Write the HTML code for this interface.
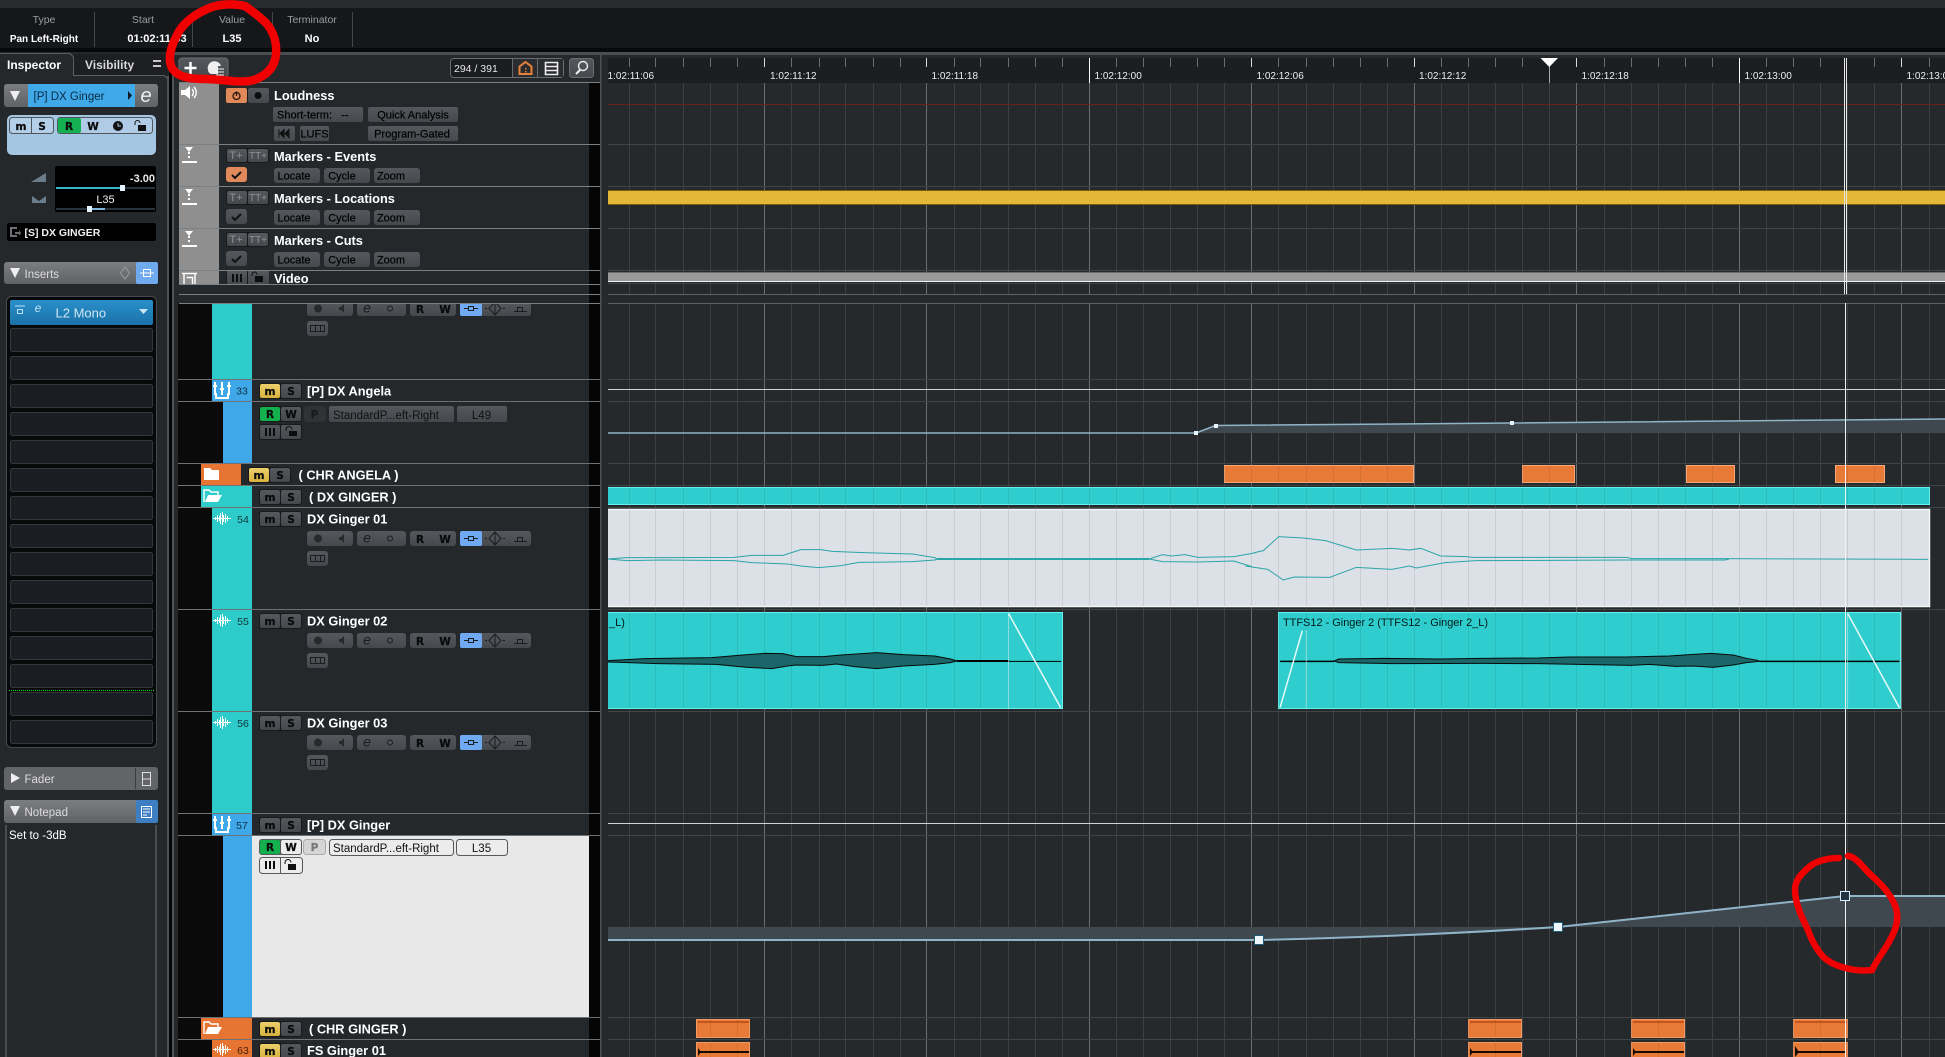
<!DOCTYPE html>
<html lang="en"><head><meta charset="utf-8"><title>Cubase project</title>
<style>
html,body{margin:0;padding:0;background:#25282b;width:1945px;height:1057px;overflow:hidden}
svg{display:block}
text{font-family:"Liberation Sans",sans-serif;white-space:pre}
.lb{font-size:10.5px;fill:#9a9ea2;text-anchor:middle}
.vl{font-size:10px;font-weight:bold;fill:#fff;text-anchor:middle}
.nm{font-size:12.8px;font-weight:bold;fill:#fff}
.bt{font-size:11px;fill:#000;stroke:#000;stroke-width:.2;text-anchor:middle}
.gl{font-family:"DejaVu Sans",sans-serif;font-size:10.5px;font-weight:bold;fill:#0a0b0c;stroke:#0a0b0c;stroke-width:.25;text-anchor:middle}
.no{font-size:10.5px;fill:#12343a;text-anchor:middle}
.ru{font-size:10px;fill:#eceef0}
.hd{font-size:11.5px;fill:#dcdcdc}
.s{fill:#1a1d21;stroke:#34373b}
.w{fill:none;stroke:#fff}
.k{fill:none;stroke:#1a1c1e}
</style></head><body>
<svg width="1945" height="1057" viewBox="0 0 1945 1057" xmlns="http://www.w3.org/2000/svg">
<defs>
<linearGradient id="gb" x1="0" y1="0" x2="0" y2="1"><stop offset="0" stop-color="#55585c"/><stop offset="1" stop-color="#45484c"/></linearGradient>
<linearGradient id="gh" x1="0" y1="0" x2="0" y2="1"><stop offset="0" stop-color="#7b7d80"/><stop offset="1" stop-color="#606265"/></linearGradient>
<linearGradient id="gy" x1="0" y1="0" x2="0" y2="1"><stop offset="0" stop-color="#ecd06a"/><stop offset="1" stop-color="#d8b23e"/></linearGradient>
<linearGradient id="gi" x1="0" y1="0" x2="0" y2="1"><stop offset="0" stop-color="#2a8fca"/><stop offset="1" stop-color="#1a72a8"/></linearGradient>
<path id="gmin" fill="none" d="M629.5 83V1057M655.5 83V1057M683.5 83V1057M710.5 83V1057M737.5 83V1057M791.5 83V1057M819.5 83V1057M845.5 83V1057M873.5 83V1057M900.5 83V1057M954.5 83V1057M980.5 83V1057M1008.5 83V1057M1035.5 83V1057M1062.5 83V1057M1116.5 83V1057M1143.5 83V1057M1170.5 83V1057M1197.5 83V1057M1224.5 83V1057M1278.5 83V1057M1306.5 83V1057M1333.5 83V1057M1360.5 83V1057M1387.5 83V1057M1441.5 83V1057M1468.5 83V1057M1495.5 83V1057M1522.5 83V1057M1549.5 83V1057M1604.5 83V1057M1631.5 83V1057M1658.5 83V1057M1685.5 83V1057M1712.5 83V1057M1766.5 83V1057M1793.5 83V1057M1820.5 83V1057M1847.5 83V1057M1874.5 83V1057M1929.5 83V1057"/>
<path id="gmaj" fill="none" d="M764.5 83V1057M926.5 83V1057M1089.5 83V1057M1251.5 83V1057M1414.5 83V1057M1576.5 83V1057M1739.5 83V1057M1901.5 83V1057"/>
<clipPath id="clips">
<rect x="608" y="487" width="1321" height="18"/><rect x="608" y="509" width="1321" height="98"/>
<rect x="608" y="612" width="454" height="97"/><rect x="1278" y="612" width="623" height="97"/>
<rect x="696" y="1019" width="54" height="38"/><rect x="1468" y="1019" width="54" height="38"/><rect x="1631" y="1019" width="54" height="38"/><rect x="1793" y="1019" width="55" height="38"/>
<rect x="1224" y="465" width="190" height="18"/><rect x="1522" y="465" width="53" height="18"/><rect x="1686" y="465" width="49" height="18"/><rect x="1835" y="465" width="50" height="18"/>
</clipPath>
<clipPath id="rulc"><rect x="608" y="58" width="1337" height="25"/></clipPath>

<g id="ms"><rect width="43" height="16" rx="3" fill="#17191b"/><rect x="1" y="1" width="20" height="14" rx="2" fill="url(#gb)"/><rect x="22" y="1" width="20" height="14" rx="2" fill="url(#gb)"/><text class="gl" x="11" y="12">m</text><text class="gl" x="32" y="12">S</text></g>
<g id="msy"><rect width="43" height="16" rx="3" fill="#17191b"/><rect x="1" y="1" width="20" height="14" rx="2" fill="url(#gy)"/><rect x="22" y="1" width="20" height="14" rx="2" fill="url(#gb)"/><text class="gl" x="11" y="12">m</text><text class="gl" x="32" y="12">S</text></g>

<g id="ctl">
<rect x="0" width="46" height="15" rx="3" fill="url(#gb)"/><rect x="50" width="49" height="15" rx="3" fill="url(#gb)"/><rect x="103" width="46" height="15" rx="3" fill="url(#gb)"/><rect x="153" width="71" height="15" rx="3" fill="url(#gb)"/>
<rect x="153" width="22" height="15" rx="2" fill="#6ea9f2"/>
<circle cx="11" cy="7.5" r="4" fill="#28292b"/><path d="M32 6h2l3-3v9l-3-3h-2z" fill="#28292b"/>
<text x="60" y="11.5" text-anchor="middle" style="font-size:14px;font-style:italic" fill="#1a1c1e">e</text><circle cx="83" cy="7.5" r="2.5" fill="none" stroke="#1a1c1e"/>
<text class="gl" x="113" y="12">R</text><text class="gl" x="138" y="12">W</text>
<path class="k" d="M157 7.5h4M167 7.5h4M161.5 5.5h5v4h-5z"/>
<path class="k" d="M188 1l6 6.5-6 6.5-6-6.5zM188 1v13M178 7.5h2M196 7.5h2"/>
<path class="k" d="M207 10.5h13M210.5 10.5v-4h5v4"/>
<rect x="0" y="20" width="21" height="15" rx="3" fill="url(#gb)"/>
<path class="k" d="M3.5 24.5h14v6h-14zM8.5 24.5v6M13.5 24.5v6"/>
</g>

<g id="au"><rect width="43" height="16" rx="3" fill="#17191b"/><rect x="1" y="1" width="20" height="14" rx="2" fill="#13b04d"/><rect x="22" y="1" width="20" height="14" rx="2" fill="url(#gb)"/><text class="gl" x="11" y="12">R</text><text class="gl" x="32" y="12">W</text></g>
<g id="au2"><rect width="43" height="16" rx="3" fill="#17191b"/><rect x="1" y="1" width="20" height="14" rx="2" fill="url(#gb)"/><rect x="22" y="1" width="20" height="14" rx="2" fill="url(#gb)"/><path d="M7 4v8M11 4v8M15 4v8" stroke="#0c0d0e" stroke-width="2"/><path d="M27 7V5.5a3 3 0 0 1 6 0" fill="none" stroke="#0c0d0e"/><rect x="30" y="7" width="8" height="5" fill="#0c0d0e"/></g>

<path id="wv" class="w" d="M-9 .5H9M-6.5-1V2M-4.5-3V4M-2.5-2V3M-1.5-5V6M.5-6V7M1.5-3V4M3.5-4V5M5.5-2V3"/>
<g id="fd"><path class="w" stroke-width="2" d="M-7-8V5M0-8V5M7-8V5" /><rect x="-9" y="-5" width="4" height="2" fill="#fff"/><rect x="-2" y="-2" width="4" height="2" fill="#fff"/><rect x="5" y="-5" width="4" height="2" fill="#fff"/><path class="w" stroke-width="2" d="M-6 3V8H6V3"/></g>
<path id="fc" fill="#fff" d="M-8-6h6l2 2H7v10H-8z"/>
<g id="fo"><path class="w" stroke-width="1.4" d="M-8 6V-6h5l2 2H6v3"/><path fill="#fff" d="M-7 6L-4-1H10L6 6z"/></g>
<g id="mk"><path fill="#fff" d="M-4 0H4L0 5z"/><path d="M0 5V12" stroke="#fff" stroke-dasharray="2 2" stroke-width="2"/><rect x="-7" y="14" width="15" height="2" fill="#fff"/></g>
<g id="tt"><rect width="43" height="15" rx="3" fill="#17191b"/><rect x="1" y="1" width="20" height="13" rx="2" fill="url(#gb)"/><rect x="22" y="1" width="20" height="13" rx="2" fill="url(#gb)"/><text x="10" y="11" style="font-size:11px" fill="#8e9194" text-anchor="middle">T+</text><text x="32" y="11" style="font-size:10px" fill="#8e9194" text-anchor="middle">TT+</text></g>
<g id="lcz"><rect x="0" width="46" height="15" rx="3" fill="url(#gb)"/><rect x="50" width="46" height="15" rx="3" fill="url(#gb)"/><rect x="100" width="46" height="15" rx="3" fill="url(#gb)"/><text class="bt" x="20" y="11.5">Locate</text><text class="bt" x="68" y="11.5">Cycle</text><text class="bt" x="117" y="11.5">Zoom</text></g>
<g id="chkd"><rect width="21" height="15" rx="3" fill="url(#gb)"/><path d="M6 8l3 3 6-6" fill="none" stroke="#111" stroke-width="2"/></g>
</defs>

<rect width="1945" height="1057" fill="#25282b"/>
<!-- top info -->
<rect width="1945" height="8" fill="#282b2e"/>
<rect y="8" width="1945" height="40" fill="#15171a"/>
<rect y="48" width="1945" height="4" fill="#08090a"/>
<path stroke="#44484b" d="M94.5 12V47M192.5 12V47M272.5 12V47M352.5 12V47"/>
<text class="lb" x="44" y="23">Type</text><text class="vl" x="44" y="42">Pan Left-Right</text>
<text class="lb" x="143" y="23">Start</text><text class="vl" x="157" y="42" style="font-size:11px">01:02:11:03</text>
<text class="lb" x="232" y="23">Value</text><text class="vl" x="232" y="42" style="font-size:11px">L35</text>
<text class="lb" x="312" y="23">Terminator</text><text class="vl" x="312" y="42" style="font-size:11px">No</text>

<!-- inspector -->
<rect y="53" width="172" height="1004" fill="#25282b"/>
<rect x="74" y="54" width="94" height="21" fill="#1d1f22"/>
<path stroke="#5a5e61" fill="none" d="M0 53.5H70L73.5 57V75.5H164L167 78"/>
<rect x="167" y="76" width="2" height="981" fill="#4e5255"/>
<rect x="169" y="52" width="3" height="1005" fill="#050505"/>
<rect x="172" y="52" width="2" height="1005" fill="#4e5255"/>
<text x="7" y="69" style="font-size:12px" font-weight="bold" fill="#fff">Inspector</text>
<text x="85" y="69" style="font-size:12px" font-weight="bold" fill="#d8d8d8">Visibility</text>
<path stroke="#c8c8c8" stroke-width="2" d="M153 61H161M153 66H161"/>

<rect x="4" y="84" width="154" height="23" rx="3" fill="url(#gh)"/>
<rect x="28" y="84" width="107" height="23" fill="#3fa9ea"/>
<path d="M10 91H20L15 101z" fill="#eee"/>
<text x="33.5" y="100" style="font-size:11.5px" fill="#0b2a40">[P] DX Ginger</text>
<path d="M128 91l4 4.500-4 4.500z" fill="#0b1a26"/>
<text x="146" y="102" text-anchor="middle" style="font-size:20px;font-style:italic" fill="#f0f0f0">e</text>

<rect x="7" y="115" width="149" height="40" rx="5" fill="#a5c6e3"/>
<rect x="9.5" y="117.5" width="44" height="16" rx="3" fill="#b4cfe8" stroke="#50565c"/>
<path stroke="#50565c" d="M31.5 118V133"/>
<rect x="57.5" y="117.5" width="95" height="16" rx="3" fill="#afcbe5" stroke="#50565c"/>
<rect x="58" y="118" width="23" height="15" rx="2" fill="#14b052"/>
<text class="gl" x="21" y="130">m</text><text class="gl" x="42" y="130">S</text><text class="gl" x="69" y="130">R</text><text class="gl" x="93" y="130">W</text>
<circle cx="118" cy="126" r="5" fill="#111"/><path d="M118 123v3h3" stroke="#a5c6e3" fill="none"/>
<path d="M135 125v-2a2.500 2.500 0 0 1 5 0" fill="none" stroke="#111"/><rect x="138" y="125" width="8" height="6" fill="#111"/>

<path d="M31 182L46 173V182z" fill="#6a7d8c"/><path d="M32 196l7 5 7-5v7H32z" fill="#6a7d8c"/>
<rect x="55" y="166" width="101" height="46" rx="2" fill="#000"/>
<text x="155" y="182" text-anchor="end" style="font-size:11px" font-weight="bold" fill="#e6e6e6">-3.00</text>
<rect x="56" y="187" width="99" height="2" fill="#26333d"/><rect x="56" y="187" width="66" height="2" fill="#39b6c8"/><rect x="120" y="185" width="5" height="6" fill="#e6f4ff"/>
<text x="105.500" y="203" text-anchor="middle" style="font-size:11px" fill="#eee">L35</text>
<rect x="56" y="208" width="99" height="2" fill="#26333d"/><rect x="89" y="208" width="16" height="2" fill="#7fb6e0"/><rect x="87" y="206" width="5" height="6" fill="#e6f4ff"/>

<rect x="7" y="223" width="149" height="18" rx="2" fill="#000"/>
<path d="M10 227h7v2h-5v6h5v2h-7zM15 232h4v-2l2 3-2 3v-2h-4z" fill="#6c7074"/>
<text x="24.500" y="236" style="font-size:10.500px" font-weight="bold" fill="#f0f0f0">[S] DX GINGER</text>

<rect x="4" y="262" width="154" height="22" rx="3" fill="url(#gh)"/>
<rect x="136" y="262" width="22" height="22" rx="2" fill="#6fa9ee"/>
<path d="M10 268H20L15 278z" fill="#eee"/>
<text class="hd" x="24.500" y="278">Inserts</text>
<path d="M125 267l4.500 6-4.500 6-4.500-6z" fill="none" stroke="#9a9c9e"/>
<path stroke="#fff" fill="none" d="M140 273H154M143.500 269.500h7v7h-7z"/>

<rect x="6.500" y="296.500" width="150" height="451" rx="5" fill="#08090a" stroke="#45494c"/>
<rect x="10" y="300" width="143" height="25" rx="2" fill="url(#gi)"/>
<path d="M15 306H25M17.500 309.500h5v4h-5z" stroke="#bfe0f4" fill="none"/>
<text x="38" y="312" text-anchor="middle" style="font-size:12px;font-style:italic" fill="#bfe0f4">e</text>
<text x="55.500" y="317.500" style="font-size:13px" fill="#cfe6f5">L2 Mono</text>
<path d="M139 309H148L143.500 314z" fill="#cfe6f5"/>
<rect class="s" x="10.500" y="328.500" width="142" height="23" rx="2"/>
<rect class="s" x="10.500" y="356.500" width="142" height="23" rx="2"/>
<rect class="s" x="10.500" y="384.500" width="142" height="23" rx="2"/>
<rect class="s" x="10.500" y="412.500" width="142" height="23" rx="2"/>
<rect class="s" x="10.500" y="440.500" width="142" height="23" rx="2"/>
<rect class="s" x="10.500" y="468.500" width="142" height="23" rx="2"/>
<rect class="s" x="10.500" y="496.500" width="142" height="23" rx="2"/>
<rect class="s" x="10.500" y="524.500" width="142" height="23" rx="2"/>
<rect class="s" x="10.500" y="552.500" width="142" height="23" rx="2"/>
<rect class="s" x="10.500" y="580.500" width="142" height="23" rx="2"/>
<rect class="s" x="10.500" y="608.500" width="142" height="23" rx="2"/>
<rect class="s" x="10.500" y="636.500" width="142" height="23" rx="2"/>
<rect class="s" x="10.500" y="664.500" width="142" height="23" rx="2"/>
<rect class="s" x="10.500" y="692.500" width="142" height="23" rx="2"/>
<rect class="s" x="10.500" y="720.500" width="142" height="23" rx="2"/>
<path d="M9 690.500H154" stroke="#1fe01f" stroke-dasharray="1 1"/>

<rect x="4" y="767" width="154" height="23" rx="3" fill="#626468"/>
<path stroke="#3a3c3e" d="M135.500 768V789"/>
<path d="M11 773l9 5-9 5z" fill="#eee"/>
<text class="hd" x="24.500" y="783">Fader</text>
<path d="M142.500 772.500h8v13h-8zM143 779h7" fill="none" stroke="#ddd"/>

<rect x="4" y="800" width="154" height="23" rx="3" fill="url(#gh)"/>
<rect x="136" y="800" width="22" height="23" rx="2" fill="#3e7fc4"/>
<path d="M10 806H20L15 816z" fill="#eee"/>
<text class="hd" x="24.500" y="816">Notepad</text>
<path d="M141.500 806.500h10v11h-10zM143 809h7M143 812h7M143 815h4" fill="none" stroke="#fff"/>
<path stroke="#4a4e52" stroke-width="2" d="M6 825V1057M156 825V1057"/>
<text x="9" y="839" style="font-size:11.500px" fill="#fff">Set to -3dB</text>

<!-- main top -->
<rect x="174" y="52" width="1771" height="3" fill="#4a4e51"/>
<rect x="179" y="58" width="49" height="19" rx="3" fill="url(#gb)" stroke="#6a6d70"/>
<path d="M190.500 62V74M184.500 68H196.500" stroke="#fff" stroke-width="2.500"/>
<path d="M208 70a6.500 6.500 0 0 1 13-4h-3v8h-6a4 4 0 0 1-4-4z" fill="#f0f0f0"/><path d="M216 69h8M216 72h8M216 75h8" stroke="#f0f0f0"/>
<rect x="450.500" y="58.500" width="113" height="19" rx="3" fill="#1a1c1f" stroke="#6a6d70"/>
<text x="454" y="72" style="font-size:10.500px" fill="#e8e8e8">294 / 391</text>
<rect x="513" y="59" width="24" height="18" fill="#2a2c2f"/><rect x="537" y="59" width="26" height="18" fill="#2a2c2f"/>
<path stroke="#6a6d70" d="M512.500 59V77M537.500 59V77"/>
<path d="M525.500 62l6 4.500V74h-12V66.500z" fill="none" stroke="#e8813a" stroke-width="2"/><path d="M525 68h1.500v1.500H525zM525 71h1.500v1.500H525z" fill="#e8813a"/>
<path d="M545.500 62.500h12v12h-12zM546 66.500h11M546 70.500h11" fill="none" stroke="#eee" stroke-width="1.600"/>
<rect x="569.500" y="58.500" width="24" height="19" rx="3" fill="url(#gb)" stroke="#6a6d70"/>
<circle cx="583" cy="66" r="4.500" fill="none" stroke="#eee" stroke-width="1.400"/><path d="M580 70l-4 4" stroke="#eee" stroke-width="2"/>

<!-- track list top -->
<rect x="179" y="83" width="40" height="201" fill="#8f8f8f"/>
<rect x="589" y="83" width="11" height="974" fill="#050505"/>
<rect x="600" y="55" width="1.500" height="1002" fill="#4e5255"/>
<path stroke="#7c7f82" d="M179 82.500H600M179 144.500H600M179 186.500H600M179 228.500H600M179 270.500H600M179 284.500H600M179 294.500H600M179 303.500H600"/>

<path d="M181 90h4l5-4v13l-5-4h-4z" fill="#fff"/><path d="M192 89a5 5 0 0 1 0 7M194 87a8 8 0 0 1 0 11" fill="none" stroke="#fff" stroke-width="1.400"/>
<rect x="226" y="88" width="43" height="15" rx="3" fill="#1a1c1e"/><rect x="226" y="88" width="21" height="15" rx="2" fill="#e08a5c"/><rect x="248" y="88" width="21" height="15" rx="2" fill="url(#gb)"/>
<circle cx="236.500" cy="96" r="3.500" fill="none" stroke="#2a1408" stroke-width="1.300"/><path d="M236.500 91.500V96" stroke="#2a1408" stroke-width="1.300"/><circle cx="258" cy="95.500" r="3.500" fill="#0c0d0e"/>
<text class="nm" x="274" y="100">Loudness</text>
<rect x="273" y="107" width="90" height="15" rx="2" fill="url(#gb)"/><text class="bt" x="277" y="118.500" style="text-anchor:start">Short-term:   --</text>
<rect x="368" y="107" width="90" height="15" rx="2" fill="url(#gb)"/><text class="bt" x="413" y="118.500">Quick Analysis</text>
<rect x="274" y="126" width="21" height="15" rx="2" fill="url(#gb)"/><path d="M279 129.500v8M280 133.500l4-4v8zM285 133.500l4-4v8z" fill="#111" stroke="#111"/>
<rect x="300" y="126" width="29" height="15" rx="2" fill="url(#gb)"/><text class="bt" x="314.500" y="137.500">LUFS</text>
<rect x="368" y="126" width="90" height="15" rx="2" fill="url(#gb)"/><text class="bt" x="412" y="137.500">Program-Gated</text>

<use href="#mk" x="189" y="147"/><use href="#tt" x="226" y="148"/>
<text class="nm" x="274" y="161">Markers - Events</text>
<rect x="226" y="167" width="21" height="15" rx="3" fill="#e08a5c"/><path d="M232 175l3 3 6-6" fill="none" stroke="#111" stroke-width="2"/>
<use href="#lcz" x="274" y="168"/>

<use href="#mk" x="189" y="189"/><use href="#tt" x="226" y="190"/>
<text class="nm" x="274" y="203">Markers - Locations</text>
<use href="#chkd" x="226" y="209"/><use href="#lcz" x="274" y="210"/>

<use href="#mk" x="189" y="231"/><use href="#tt" x="226" y="232"/>
<text class="nm" x="274" y="245">Markers - Cuts</text>
<use href="#chkd" x="226" y="251"/><use href="#lcz" x="274" y="252"/>

<path d="M182 273.500H197M184 273V284M195 273V284M186.500 277.500h6V284" stroke="#fff" fill="none" stroke-width="1.400"/>
<rect x="226" y="271" width="43" height="13" fill="#17191b"/><rect x="227" y="271" width="20" height="13" fill="url(#gb)"/><rect x="248" y="271" width="21" height="13" fill="url(#gb)"/>
<path d="M233 274v8M237 274v8M241 274v8" stroke="#0c0d0e" stroke-width="2"/><path d="M252 276v-1.500a2.500 2.500 0 0 1 5 0" fill="none" stroke="#0c0d0e"/><rect x="255" y="276" width="8" height="6" fill="#0c0d0e"/>
<text class="nm" x="274" y="283">Video</text>

<!-- track list lower -->
<rect x="178" y="303" width="74" height="754" fill="#0a0a0a"/>
<rect x="212" y="303" width="40" height="76" fill="#2dcbca"/>
<rect x="212" y="379" width="40" height="22" fill="#3fa8e8"/>
<rect x="223" y="401" width="29" height="62" fill="#3fa8e8"/>
<rect x="201" y="463" width="40" height="22" fill="#e67534"/><rect x="241" y="463" width="11" height="22" fill="#25282b"/>
<rect x="201" y="485" width="51" height="22" fill="#2dcbca"/>
<rect x="212" y="507" width="40" height="306" fill="#2dcbca"/>
<rect x="212" y="813" width="40" height="22" fill="#3fa8e8"/>
<rect x="223" y="835" width="29" height="182" fill="#3fa8e8"/>
<rect x="252" y="835" width="337" height="182" fill="#e8e8e8"/>
<rect x="201" y="1017" width="51" height="22" fill="#e67534"/>
<rect x="212" y="1039" width="40" height="18" fill="#e67534"/>

<use href="#ctl" x="307" y="301"/>
<rect x="179" y="285" width="421" height="18" fill="#25282b"/>
<rect x="589" y="285" width="11" height="18" fill="#050505"/>
<path stroke="#7c7f82" d="M179 284.500H600M179 294.500H600M179 303.500H600"/>

<path stroke="#6f7275" d="M178 379.500H600M178 401.500H600M178 463.500H600M178 485.500H600M178 507.500H600M178 609.500H600M178 711.500H600M178 813.500H600M178 835.500H600M178 1017.500H600M178 1039.500H600"/>

<use href="#fd" x="222" y="390"/><text class="no" x="242" y="394.500" style="fill:#12324c">33</text>
<use href="#msy" x="259" y="383"/><text class="nm" x="307" y="395.500">[P] DX Angela</text>
<use href="#au" x="259" y="406"/>
<rect x="304" y="406" width="22" height="16" rx="3" fill="#303336"/><text class="gl" x="314.500" y="418" style="fill:#1a1b1d;stroke:#1a1b1d">P</text>
<rect x="329" y="406" width="125" height="16" rx="2" fill="url(#gb)"/><text x="333" y="419" style="font-size:11.500px" fill="#111">StandardP...eft-Right</text>
<rect x="457" y="406" width="50" height="16" rx="2" fill="url(#gb)"/><text x="481.500" y="419" text-anchor="middle" style="font-size:11.500px" fill="#111">L49</text>
<use href="#au2" x="259" y="424"/>

<use href="#fc" x="212" y="474"/>
<use href="#msy" x="248" y="467"/><text class="nm" x="298.500" y="479.500">( CHR ANGELA )</text>
<use href="#fo" x="212" y="496"/>
<use href="#ms" x="259" y="489"/><text class="nm" x="309" y="501.500">( DX GINGER )</text>

<use href="#wv" x="222" y="518"/><text class="no" x="243" y="523">54</text>
<use href="#ms" x="259" y="511"/><text class="nm" x="307" y="523.500">DX Ginger 01</text>
<use href="#ctl" x="307" y="531"/>

<use href="#wv" x="222" y="620"/><text class="no" x="243" y="625">55</text>
<use href="#ms" x="259" y="613"/><text class="nm" x="307" y="625.500">DX Ginger 02</text>
<use href="#ctl" x="307" y="633"/>

<use href="#wv" x="222" y="722"/><text class="no" x="243" y="727">56</text>
<use href="#ms" x="259" y="715"/><text class="nm" x="307" y="727.500">DX Ginger 03</text>
<use href="#ctl" x="307" y="735"/>

<use href="#fd" x="222" y="824"/><text class="no" x="242" y="829" style="fill:#12324c">57</text>
<use href="#ms" x="259" y="817"/><text class="nm" x="307" y="829.500">[P] DX Ginger</text>
<rect x="259" y="839" width="43" height="16" rx="3" fill="#55585c"/><rect x="260" y="840" width="20" height="14" rx="2" fill="#13b04d"/><rect x="281" y="840" width="20" height="14" rx="2" fill="#ececec"/><text class="gl" x="270" y="851">R</text><text class="gl" x="291" y="851">W</text>
<rect x="303.500" y="839.500" width="22" height="15" rx="3" fill="#d5d5d5" stroke="#aaa"/><text class="gl" x="314.500" y="851" style="fill:#777;stroke:#777">P</text>
<rect x="329.500" y="839.500" width="124" height="16" rx="3" fill="#ececec" stroke="#55585c"/><text x="333" y="852" style="font-size:11.500px" fill="#111">StandardP...eft-Right</text>
<rect x="456.500" y="839.500" width="51" height="16" rx="3" fill="#ececec" stroke="#55585c"/><text x="481.500" y="852" text-anchor="middle" style="font-size:11.500px" fill="#111">L35</text>
<rect x="259.500" y="857.500" width="43" height="16" rx="3" fill="#ececec" stroke="#55585c"/><path stroke="#55585c" d="M280.500 858V873"/>
<path d="M266 861v8M270 861v8M274 861v8" stroke="#0c0d0e" stroke-width="2"/><path d="M285 864v-1.500a3 3 0 0 1 6 0" fill="none" stroke="#0c0d0e"/><rect x="288" y="864" width="8" height="6" fill="#0c0d0e"/>

<use href="#fo" x="212" y="1028"/>
<use href="#msy" x="259" y="1021"/><text class="nm" x="309" y="1033.500">( CHR GINGER )</text>
<use href="#wv" x="222" y="1049"/><text class="no" x="243" y="1054" style="fill:#4a1e08">63</text>
<use href="#msy" x="259" y="1043"/><text class="nm" x="307" y="1055">FS Ginger 01</text>

<!-- arrange -->
<rect x="602" y="55" width="1343" height="1002" fill="#25292c"/>
<use href="#gmin" stroke="#3c4043"/><use href="#gmaj" stroke="#6b6e71"/>
<path stroke="#404447" d="M608 144.500H1945M608 186.500H1945M608 228.500H1945M608 270.500H1945M608 283.500H1945M608 379.500H1945M608 401.500H1945M608 463.500H1945M608 485.500H1945M608 507.500H1945M608 609.500H1945M608 711.500H1945M608 813.500H1945M608 835.500H1945M608 1017.500H1945M608 1039.500H1945"/>
<rect x="601.500" y="295" width="1343.500" height="8" fill="#25292c"/>
<path stroke="#5e6265" d="M608 294.500H1945M608 303.500H1945"/>
<path stroke="#6b1f1f" d="M608 104.500H1945"/>
<!-- ruler -->
<rect x="608" y="58" width="1337" height="25" fill="#1b1d21"/>
<path stroke="#6a6d70" d="M629.500 58V67M655.500 58V67M683.500 58V67M710.500 58V67M737.500 58V67M791.500 58V67M819.500 58V67M845.500 58V67M873.500 58V67M900.500 58V67M954.500 58V67M980.500 58V67M1008.500 58V67M1035.500 58V67M1062.500 58V67M1116.500 58V67M1143.500 58V67M1170.500 58V67M1197.500 58V67M1224.500 58V67M1278.500 58V67M1306.500 58V67M1333.500 58V67M1360.500 58V67M1387.500 58V67M1441.500 58V67M1468.500 58V67M1495.500 58V67M1522.500 58V67M1604.500 58V67M1631.500 58V67M1658.500 58V67M1685.500 58V67M1712.500 58V67M1766.500 58V67M1793.500 58V67M1820.500 58V67M1874.500 58V67M1929.500 58V67"/>
<path stroke="#d8d8d8" d="M764.500 58V67M926.500 58V67M1251.500 58V67M1414.500 58V67M1576.500 58V67M1901.500 58V67"/>
<path stroke="#fff" d="M1089.500 58V83M1739.500 58V83"/>
<path stroke="#aaa" d="M1549.500 66V83"/>
<g clip-path="url(#rulc)">
<text class="ru" x="607.500" y="79">1:02:11:06</text><text class="ru" x="770" y="79">1:02:11:12</text><text class="ru" x="931.500" y="79">1:02:11:18</text><text class="ru" x="1094.500" y="79">1:02:12:00</text><text class="ru" x="1256.500" y="79">1:02:12:06</text><text class="ru" x="1419" y="79">1:02:12:12</text><text class="ru" x="1581.500" y="79">1:02:12:18</text><text class="ru" x="1744.500" y="79">1:02:13:00</text><text class="ru" x="1906.500" y="79">1:02:13:06</text>
</g>
<path d="M1540.500 58H1558L1549.300 67z" fill="#fff"/>

<!-- yellow / grey -->
<rect x="608" y="190" width="1337" height="15" fill="#e3b838"/><path stroke="#7a5a10" d="M608 190.500H1945M608 204.500H1945"/>
<rect x="608" y="272" width="1337" height="9" fill="#9a9a9a"/><path stroke="#6a6d70" d="M608 272.500H1945"/><path stroke="#f0f0f0" d="M608 281.500H1945"/>

<!-- automation white lines -->
<path stroke="#d0d3d5" d="M608 389.500H1945M608 823.500H1945"/>
<!-- clips -->
<g>
<rect x="1224.500" y="465.500" width="189" height="17" fill="#e87a38" stroke="#f6a878"/><rect x="1522.500" y="465.500" width="52" height="17" fill="#e87a38" stroke="#f6a878"/><rect x="1686.500" y="465.500" width="48" height="17" fill="#e87a38" stroke="#f6a878"/><rect x="1835.500" y="465.500" width="49" height="17" fill="#e87a38" stroke="#f6a878"/>
<rect x="608" y="487" width="1321" height="18" fill="#2fcdcd"/><path fill="none" stroke="#63f2ee" d="M608 487.500H1929.500V504.500H608"/>
<rect x="608" y="509" width="1321" height="98" fill="#dce0e7"/><path fill="none" stroke="#f4f5f6" stroke-width="1.500" d="M608 509.500H1929.500V606.500H608"/>
<rect x="608" y="612" width="454" height="97" fill="#2fcdcd"/><path fill="none" stroke="#63f2ee" d="M608 612.500H1062.500V708.500H608"/>
<rect x="1278.500" y="612.500" width="622" height="96" fill="#2fcdcd" stroke="#63f2ee"/>
<rect x="696.500" y="1019.500" width="53" height="18" fill="#e87a38" stroke="#f09a64"/><rect x="1468.500" y="1019.500" width="53" height="18" fill="#e87a38" stroke="#f09a64"/><rect x="1631.500" y="1019.500" width="53" height="18" fill="#e87a38" stroke="#f09a64"/><rect x="1793.500" y="1019.500" width="54" height="18" fill="#e87a38" stroke="#f09a64"/>
<rect x="696.500" y="1042.500" width="53" height="15" fill="#e87a38" stroke="#f09a64"/><rect x="1468.500" y="1042.500" width="53" height="15" fill="#e87a38" stroke="#f09a64"/><rect x="1631.500" y="1042.500" width="53" height="15" fill="#e87a38" stroke="#f09a64"/><rect x="1793.500" y="1042.500" width="54" height="15" fill="#e87a38" stroke="#f09a64"/>
<path stroke="#c4551c" stroke-width="2" d="M698 1022H749M1470 1022H1521M1633 1022H1684M1795 1022H1847"/>
<path stroke="#150a04" stroke-width="2" d="M698 1052H749M1470 1052H1521M1633 1052H1684M1795 1052H1845"/>
<path fill="#150a04" d="M698 1048l3 4-3 4zM1470 1048l3 4-3 4zM1633 1048l3 4-3 4zM1795 1046l4 6-4 5z"/>
</g>
<g clip-path="url(#clips)" stroke="#000" stroke-opacity=".08"><use href="#gmin"/><use href="#gmaj"/></g>

<!-- ginger 01 wave -->
<g fill="none" stroke="#2aa5a8">
<g transform="translate(600 480) scale(.4464 .3333)">
<path vector-effect="non-scaling-stroke" d="M18 237L60 233L140 233L300 232L340 226L410 226L450 209L495 209L520 214L590 218L700 222L750 233L755 237L1230 237L1260 224L1280 228L1310 224L1340 232L1420 230L1470 218"/>
<path vector-effect="non-scaling-stroke" d="M18 237L60 242L140 240L300 242L340 248L420 252L450 258L490 263L540 257L580 247L700 245L750 240L755 237L1230 237L1260 245L1340 246L1420 243L1460 260"/>
<path vector-effect="non-scaling-stroke" stroke-width="2" d="M755 237H1230"/>
</g>
<g transform="translate(1250 480) scale(.4433 .3333)">
<path vector-effect="non-scaling-stroke" d="M10 218L30 212L65 170L120 174L170 182L240 210L320 205L360 210L385 205L430 228L490 230L500 232L850 232L860 236L1070 236L1530 238"/>
<path vector-effect="non-scaling-stroke" d="M-10 258L40 268L75 300L100 291L180 292L240 262L320 268L360 258L375 264L440 248L510 242L850 240L1070 240L1080 238"/>
</g>
</g>
<!-- ginger 02 waves -->
<g transform="translate(600 480) scale(.4464 .3333)">
<path vector-effect="non-scaling-stroke" fill="#1a6668" stroke="#0a0a0a" d="M18 542L100 536L250 533L320 525L370 520L410 521L440 530L500 530L540 525L620 518L680 524L750 528L785 537L800 543L785 548L750 553L680 558L620 566L570 560L530 552L500 556L440 555L420 558L385 566L330 562L260 553L130 551L18 546Z"/>
<path vector-effect="non-scaling-stroke" stroke="#000" stroke-width="2" d="M800 543H915"/><path vector-effect="non-scaling-stroke" stroke="#000" d="M915 544H1033"/>
<path vector-effect="non-scaling-stroke" stroke="#fff" stroke-dasharray="1 1" d="M915 400V685"/>
<path vector-effect="non-scaling-stroke" stroke="#e8fafa" stroke-width="1.500" d="M915 400L1032 683"/>
</g>
<g transform="translate(1250 480) scale(.4433 .3333)">
<path vector-effect="non-scaling-stroke" fill="#1a6668" stroke="#0a0a0a" d="M190 543L200 537L300 535L430 537L520 535L650 534L720 531L850 531L945 528L1000 523L1040 520L1090 525L1120 535L1145 541L1150 544L1120 548L1090 555L1045 562L1000 558L960 559L900 553L860 556L740 553L650 551L520 550L320 551L200 548Z"/>
<path vector-effect="non-scaling-stroke" stroke="#000" stroke-width="1.500" d="M68 544H190M1150 544H1465"/>
<path vector-effect="non-scaling-stroke" stroke="#fff" stroke-dasharray="1 1" d="M127 452V685M1348 400V685"/>
<path vector-effect="non-scaling-stroke" stroke="#e8fafa" stroke-width="1.500" d="M68 682L118 452M1348 400L1465 683"/>
</g>
<text x="609" y="626" style="font-size:11px" fill="#051a1a">_L)</text>
<text x="1283" y="626" style="font-size:11px" fill="#051a1a" textLength="205" lengthAdjust="spacingAndGlyphs">TTFS12 - Ginger 2 (TTFS12 - Ginger 2_L)</text>

<!-- automation angela -->
<path d="M1196 433L1215.500 425.500L1512 423L1945 419V433Z" fill="#40484f"/>
<path d="M608 433H1196L1215.500 425.500L1512 423L1945 419" fill="none" stroke="#8fb4c8" stroke-width="1.500"/>
<rect x="1194" y="431" width="4" height="4" fill="#eaf4fb"/><rect x="1214" y="424" width="4" height="4" fill="#eaf4fb"/><rect x="1510" y="421" width="4" height="4" fill="#eaf4fb"/>
<!-- automation ginger -->
<path d="M608 927H1558Q1420 936 1259 940H608Z" fill="#40484f"/>
<path d="M1558 927Q1700 912 1845 896H1945V927Z" fill="#40484f"/>
<path d="M608 940H1259Q1420 936 1558 927Q1700 912 1845 896H1945" fill="none" stroke="#8fb4c8" stroke-width="2"/>
<rect x="1254.500" y="935.500" width="9" height="9" fill="#eef6fc" stroke="#1e5c7a"/>
<rect x="1553.500" y="922.500" width="9" height="9" fill="#eef6fc" stroke="#1e5c7a"/>
<!-- playhead -->
<path stroke="#e8e8e8" d="M1844.500 58V294M1846.500 58V294"/>
<path stroke="#f2f2f2" d="M1845.500 303V1057"/>
<rect x="1840.500" y="891.500" width="9" height="9" fill="#24343f" stroke="#d6f0ff"/>

<!-- red marks -->
<path d="M245 6C232 3 216 4 205 10C190 17 181 26 176 37C170 49 168 60 172 68C178 78 192 79 206 79C222 79 240 84 254 80C268 75 275 66 276 54C277 42 273 31 266 23C258 15 252 11 245 6Z" fill="none" stroke="#f00000" stroke-width="8.500" stroke-linecap="round"/>
<path d="M1839 858C1828 858 1815 861 1808 868C1800 875 1795 881 1795 890C1795 903 1802 918 1808 930C1813 944 1820 955 1827 960C1838 968 1858 972 1872 970C1878 958 1885 950 1890 940C1897 928 1899 918 1896 908C1891 894 1882 885 1871 875C1864 869 1857 857 1848 856" fill="none" stroke="#f00000" stroke-width="6.500" stroke-linecap="round"/>
</svg>
</body></html>
